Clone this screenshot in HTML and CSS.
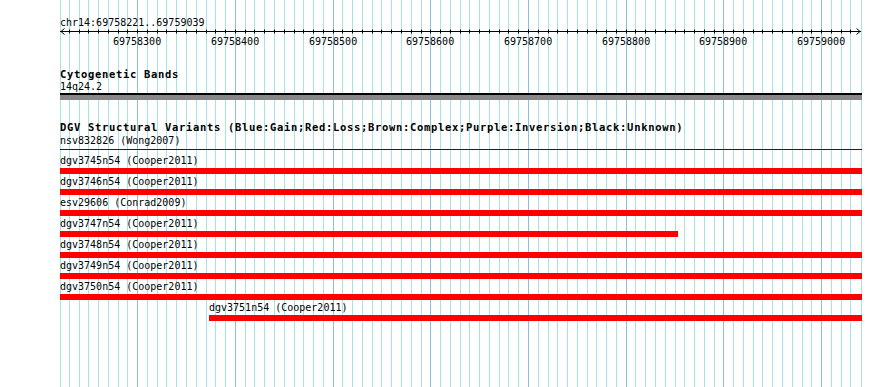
FILE: index.html
```html
<!DOCTYPE html>
<html lang="en">
<head>
  <meta charset="UTF-8">
  <title>chr14:69758221..69759039</title>
  <link rel="stylesheet" href="styles.css">
</head>
<body>
  <div class="browser">
    <svg class="grid" id="grid" width="802" height="387"></svg>

    <div class="ruler">
      <div class="position">chr14:69758221..69759039</div>
      <svg class="scale" id="scale" width="802" height="6"></svg>
      <div class="scale-labels" id="scaleLabels"></div>
    </div>

    <div class="track cyto">
      <div class="track-title">Cytogenetic Bands</div>
      <div class="label">14q24.2</div>
      <div class="band"></div>
    </div>

    <div class="track dgv">
      <div class="track-title">DGV Structural Variants (Blue:Gain;Red:Loss;Brown:Complex;Purple:Inversion;Black:Unknown)</div>
      <div class="feature gain">
        <div class="label">nsv832826 (Wong2007)</div>
        <div class="glyph"></div>
      </div>
      <div class="feature loss">
        <div class="label">dgv3745n54 (Cooper2011)</div>
        <div class="glyph"></div>
      </div>
      <div class="feature loss">
        <div class="label">dgv3746n54 (Cooper2011)</div>
        <div class="glyph"></div>
      </div>
      <div class="feature loss">
        <div class="label">esv29606 (Conrad2009)</div>
        <div class="glyph"></div>
      </div>
      <div class="feature loss" style="width:618px">
        <div class="label">dgv3747n54 (Cooper2011)</div>
        <div class="glyph"></div>
      </div>
      <div class="feature loss">
        <div class="label">dgv3748n54 (Cooper2011)</div>
        <div class="glyph"></div>
      </div>
      <div class="feature loss">
        <div class="label">dgv3749n54 (Cooper2011)</div>
        <div class="glyph"></div>
      </div>
      <div class="feature loss">
        <div class="label">dgv3750n54 (Cooper2011)</div>
        <div class="glyph"></div>
      </div>
      <div class="feature loss" style="margin-left:149px;width:653px">
        <div class="label">dgv3751n54 (Cooper2011)</div>
        <div class="glyph"></div>
      </div>
    </div>
  </div>

  <script>
    const START = 69758221;
    const END = 69759039;
    const SCALE = 0.977;
    const W = 802;
    const H = 387;
    const NS = 'http://www.w3.org/2000/svg';

    function xOf(bp) {
      return Math.round((bp - START) * SCALE);
    }

    function line(svg, x1, y1, x2, y2, cls) {
      const l = document.createElementNS(NS, 'line');
      l.setAttribute('x1', x1);
      l.setAttribute('y1', y1);
      l.setAttribute('x2', x2);
      l.setAttribute('y2', y2);
      if (cls) l.setAttribute('class', cls);
      svg.appendChild(l);
    }

    const grid = document.getElementById('grid');
    const scale = document.getElementById('scale');
    const labels = document.getElementById('scaleLabels');

    // edges of the panel
    line(grid, 0.5, 0, 0.5, H, 'minor');
    line(grid, W - 0.5, 0, W - 0.5, H, 'minor');

    // ruler axis with arrows at both ends
    line(scale, 0, 2.5, W - 1, 2.5, 'axis');
    const arrows = document.createElementNS(NS, 'path');
    arrows.setAttribute('d', 'M4.5 -0.5 L1 2.5 L4.5 5.5 M' + (W - 5.5) + ' -0.5 L' + (W - 2) + ' 2.5 L' + (W - 5.5) + ' 5.5');
    arrows.setAttribute('class', 'axis');
    scale.appendChild(arrows);

    for (let bp = Math.ceil(START / 10) * 10; bp <= END; bp += 10) {
      const x = xOf(bp) + 0.5;
      const major = bp % 100 === 0;
      line(grid, x, 0, x, H, major ? 'major' : 'minor');
      line(scale, x, 0.5, x, 4.5, 'axis');
      if (major) {
        const span = document.createElement('span');
        span.textContent = bp;
        span.style.left = (xOf(bp) - 24) + 'px';
        labels.appendChild(span);
      }
    }
  </script>
</body>
</html>
```

FILE: styles.css
```css
body {
  margin: 0;
  background: #fff;
  color: #000;
  font-family: "DejaVu Sans Mono", "Liberation Mono", monospace;
  font-size: 10px;
  line-height: 13px;
  overflow: hidden;
}
.browser {
  position: relative;
  width: 802px;
  height: 387px;
  margin-left: 60px;
}
.grid {
  position: absolute;
  left: 0;
  top: 0;
}
.grid .minor {
  stroke: #a6e4ea;
  stroke-width: 1;
}
.grid .major {
  stroke: #86c3e2;
  stroke-width: 1;
}
.ruler,
.track {
  position: relative;
}
.ruler {
  padding-top: 16px;
}
.position {
  height: 13px;
  white-space: nowrap;
}
.scale {
  display: block;
  overflow: visible;
}
.scale .axis {
  stroke: #000;
  stroke-width: 1;
  fill: none;
}
.scale-labels {
  position: relative;
  height: 13px;
}
.scale-labels span {
  position: absolute;
  top: 0;
  width: 48px;
  text-align: center;
}
.track-title {
  height: 12px;
  font-size: 10.5px;
  line-height: 12px;
  font-weight: bold;
  letter-spacing: 0.68px;
  white-space: nowrap;
}
.label {
  height: 13px;
  white-space: nowrap;
}
.cyto {
  margin-top: 20px;
}
.band {
  height: 5px;
  border-top: 2px solid #000;
  background: #878787;
}
.dgv {
  margin-top: 21px;
}
.dgv .track-title {
  margin-bottom: 1px;
}
.feature.gain .glyph {
  height: 1px;
  margin: 2px 0 4px;
  background: #0000ff;
}
.feature.loss .glyph {
  height: 6px;
  margin: 1px 0;
  background: #ff0000;
}
```
